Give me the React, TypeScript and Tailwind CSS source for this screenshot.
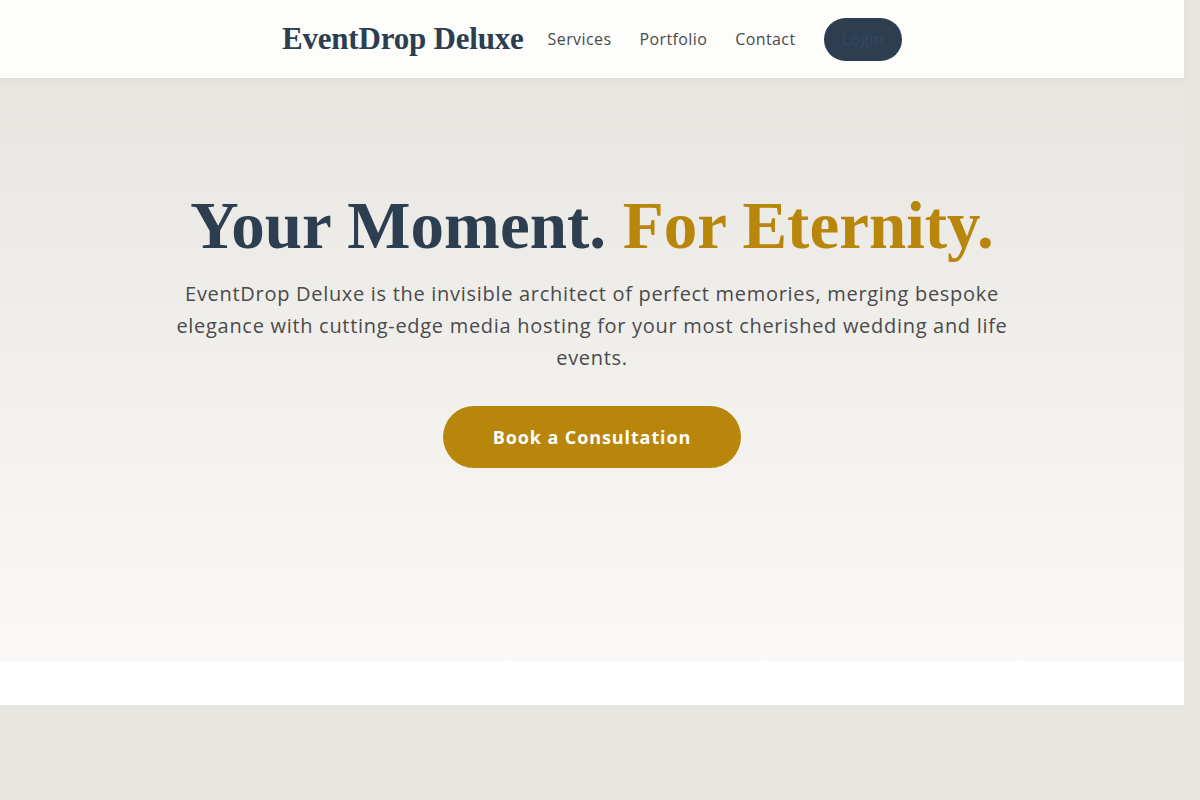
import React from 'react';

const serif = "font-['Liberation_Serif',serif]";
const sans = "font-['Open_Sans',sans-serif]";

const Header: React.FC = () => {
  return (
    <header className="relative z-10 h-[78px] bg-[#fdfdfc] shadow-[0_2px_10px_rgba(0,0,0,0.06)] flex items-center justify-center">
      <div className="flex items-center">
        <a className={`${serif} text-[31px] font-bold text-[#2c3e50] tracking-[-0.2px]`}>EventDrop Deluxe</a>
        <nav className={`${sans} flex items-center gap-7 ml-6 text-[16px] tracking-[0.4px] text-[#4a4a4a]`}>
          <a>Services</a>
          <a>Portfolio</a>
          <a>Contact</a>
          <button className="h-[43px] px-[18px] rounded-full bg-[#2c3e50] text-[#34495e] text-[16px]">Login</button>
        </nav>
      </div>
    </header>
  );
};

const Hero: React.FC = () => {
  return (
    <section className="h-[583px] bg-gradient-to-b from-[#e8e6e1] to-[#faf9f7] flex flex-col items-center pt-[107px]">
      <h1 className={`${serif} text-[67px] leading-[80px] font-bold text-[#2c3e50]`}>
        Your Moment. <span className="text-[#b8860b]">For Eternity.</span>
      </h1>
      <p className={`${sans} mt-[13px] w-[860px] text-center text-[20px] leading-[32px] tracking-[0.7px] text-[#4a4a4a]`}>
        EventDrop Deluxe is the invisible architect of perfect memories, merging bespoke elegance with cutting-edge media hosting for your most cherished wedding and life events.
      </p>
      <button className={`${sans} mt-[32px] w-[298px] h-[62px] rounded-full bg-[#b8860b] text-white text-[18px] font-bold tracking-[0.9px]`}>
        Book a Consultation
      </button>
    </section>
  );
};

export default function App() {
  return (
    <div className="min-h-screen w-full bg-[#e8e6e1]">
      <div className="w-[1184px] bg-white">
        <Header />
        <Hero />
        <div className="h-[44px] bg-white" />
      </div>
    </div>
  );
}
